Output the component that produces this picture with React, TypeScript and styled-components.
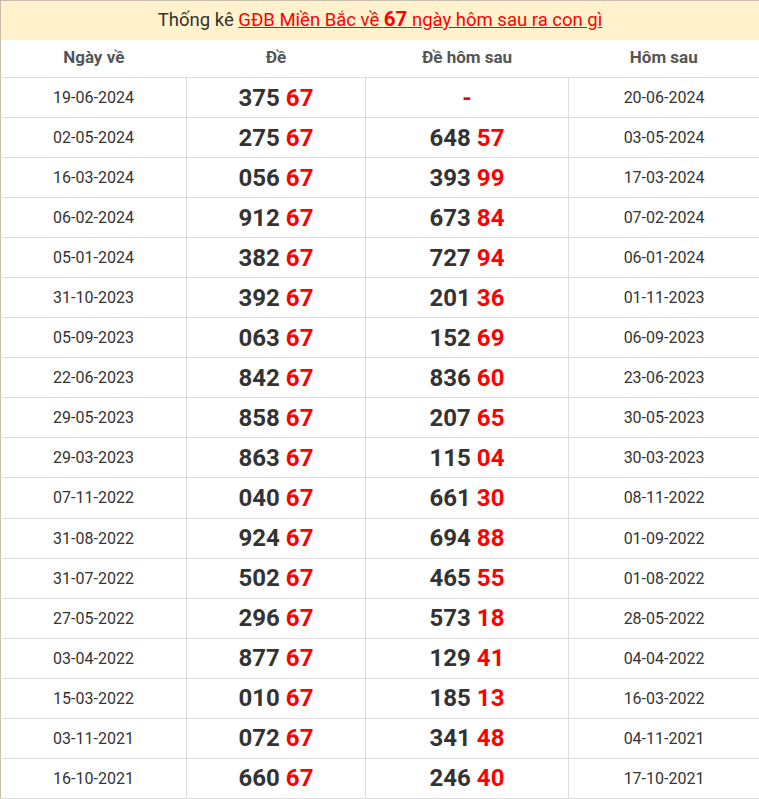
import React from "react";
import styled, { createGlobalStyle } from "styled-components";

type Row = {
  date: string;
  head: string;
  tail: string;
  nextHead?: string;
  nextTail?: string;
  nextDate: string;
};

const rows: Row[] = [
  { date: "19-06-2024", head: "375", tail: "67", nextDate: "20-06-2024" },
  { date: "02-05-2024", head: "275", tail: "67", nextHead: "648", nextTail: "57", nextDate: "03-05-2024" },
  { date: "16-03-2024", head: "056", tail: "67", nextHead: "393", nextTail: "99", nextDate: "17-03-2024" },
  { date: "06-02-2024", head: "912", tail: "67", nextHead: "673", nextTail: "84", nextDate: "07-02-2024" },
  { date: "05-01-2024", head: "382", tail: "67", nextHead: "727", nextTail: "94", nextDate: "06-01-2024" },
  { date: "31-10-2023", head: "392", tail: "67", nextHead: "201", nextTail: "36", nextDate: "01-11-2023" },
  { date: "05-09-2023", head: "063", tail: "67", nextHead: "152", nextTail: "69", nextDate: "06-09-2023" },
  { date: "22-06-2023", head: "842", tail: "67", nextHead: "836", nextTail: "60", nextDate: "23-06-2023" },
  { date: "29-05-2023", head: "858", tail: "67", nextHead: "207", nextTail: "65", nextDate: "30-05-2023" },
  { date: "29-03-2023", head: "863", tail: "67", nextHead: "115", nextTail: "04", nextDate: "30-03-2023" },
  { date: "07-11-2022", head: "040", tail: "67", nextHead: "661", nextTail: "30", nextDate: "08-11-2022" },
  { date: "31-08-2022", head: "924", tail: "67", nextHead: "694", nextTail: "88", nextDate: "01-09-2022" },
  { date: "31-07-2022", head: "502", tail: "67", nextHead: "465", nextTail: "55", nextDate: "01-08-2022" },
  { date: "27-05-2022", head: "296", tail: "67", nextHead: "573", nextTail: "18", nextDate: "28-05-2022" },
  { date: "03-04-2022", head: "877", tail: "67", nextHead: "129", nextTail: "41", nextDate: "04-04-2022" },
  { date: "15-03-2022", head: "010", tail: "67", nextHead: "185", nextTail: "13", nextDate: "16-03-2022" },
  { date: "03-11-2021", head: "072", tail: "67", nextHead: "341", nextTail: "48", nextDate: "04-11-2021" },
  { date: "16-10-2021", head: "660", tail: "67", nextHead: "246", nextTail: "40", nextDate: "17-10-2021" },
];

const GlobalStyle = createGlobalStyle`
  html, body {
    margin: 0;
    padding: 0;
    background: #fff;
  }
  body {
    font-family: Roboto, "Liberation Sans", Arial, sans-serif;
  }
`;

const Table = styled.table`
  width: 759px;
  border-collapse: collapse;
  border: 1px solid #c9bcab;
  table-layout: fixed;
  color: #333;
`;

const Caption = styled.th`
  height: 36px;
  padding: 0 0 3px;
  background: #fff2cc;
  font-size: 18.5px;
  font-weight: 400;
  color: #333;
  text-align: center;
  vertical-align: middle;
`;

const Link = styled.a`
  color: #f00;
  text-decoration: underline;
  b {
    font-size: 20.5px;
    font-weight: 700;
  }
`;

const HeadCell = styled.th`
  height: 34px;
  padding: 0 0 3px;
  font-size: 17px;
  font-weight: 700;
  color: #555;
  text-align: center;
  border-bottom: 1px solid #ddd;
`;

const BodyRow = styled.tr`
  height: 40.05px;
`;

const Cell = styled.td<{ $big?: boolean }>`
  padding: 0;
  text-align: center;
  vertical-align: middle;
  border: 1px solid #ddd;
  border-top: none;
  font-size: ${(p) => (p.$big ? "24px" : "16px")};
  font-weight: ${(p) => (p.$big ? 700 : 400)};
  color: #333;
  &:first-child {
    border-left: none;
  }
  &:last-child {
    border-right: none;
  }
`;

const Red = styled.span`
  color: #f00;
`;

const App: React.FC = () => {
  return (
    <>
      <GlobalStyle />
      <Table>
        <colgroup>
          <col style={{ width: 186 }} />
          <col style={{ width: 179 }} />
          <col style={{ width: 203 }} />
          <col style={{ width: 191 }} />
        </colgroup>
        <thead>
          <tr>
            <Caption colSpan={4}>
              Thống kê{" "}
              <Link href="#">
                GĐB Miền Bắc về <b>67</b> ngày hôm sau ra con gì
              </Link>
            </Caption>
          </tr>
          <tr>
            <HeadCell>Ngày về</HeadCell>
            <HeadCell>Đề</HeadCell>
            <HeadCell>Đề hôm sau</HeadCell>
            <HeadCell>Hôm sau</HeadCell>
          </tr>
        </thead>
        <tbody>
          {rows.map((r) => (
            <BodyRow key={r.date}>
              <Cell>{r.date}</Cell>
              <Cell $big>
                {r.head} <Red>{r.tail}</Red>
              </Cell>
              <Cell $big>
                {r.nextHead ? (
                  <>
                    {r.nextHead} <Red>{r.nextTail}</Red>
                  </>
                ) : (
                  <Red>-</Red>
                )}
              </Cell>
              <Cell>{r.nextDate}</Cell>
            </BodyRow>
          ))}
        </tbody>
      </Table>
    </>
  );
};

export default App;
